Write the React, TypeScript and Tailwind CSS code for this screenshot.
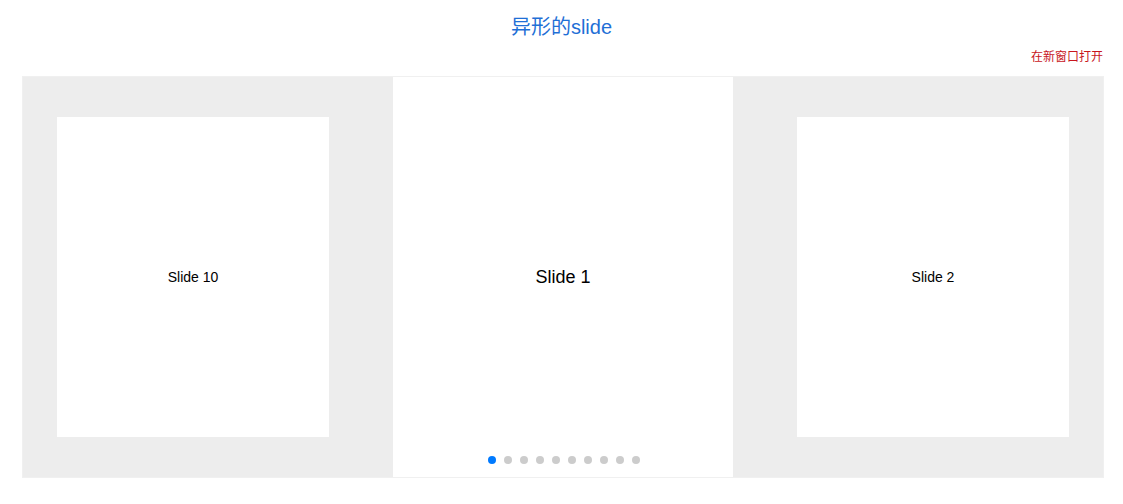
const slides = ['Slide 10', 'Slide 1', 'Slide 2'];

function SideSlide({ label }: { label: string }) {
  return (
    <div className="flex h-[400px] w-[340px] shrink-0 items-center justify-center">
      <div className="flex h-[320px] w-[272px] items-center justify-center bg-white text-[14px] text-black">
        {label}
      </div>
    </div>
  );
}

export default function App() {
  return (
    <div className="min-h-screen bg-white font-['Liberation_Sans','Noto_Sans_CJK_SC',sans-serif]">
      <h1 className="pt-[13px] text-center text-[20px] leading-[28px] text-[#1f6fd6]">异形的slide</h1>
      <div className="mt-[8px] flex h-[16px] justify-end pr-[20px]">
        <a className="text-[12px] leading-[16px] text-[#c8161d]" href="#">
          在新窗口打开
        </a>
      </div>
      <div className="relative ml-[22px] mt-[11px] h-[402px] w-[1082px] overflow-hidden border border-[#f0f0f0] bg-[#ededed]">
        <div className="flex gap-[30px]">
          <SideSlide label={slides[0]} />
          <div className="flex h-[400px] w-[340px] shrink-0 items-center justify-center bg-white text-[18px] text-black">
            {slides[1]}
          </div>
          <SideSlide label={slides[2]} />
        </div>
        <div className="absolute left-[371px] top-[379px] flex w-[340px] justify-center">
          {Array.from({ length: 10 }).map((_, i) => (
            <span
              key={i}
              className={`mx-[4px] h-[8px] w-[8px] rounded-full ${i === 0 ? 'bg-[#007aff]' : 'bg-[#cccccc]'}`}
            />
          ))}
        </div>
      </div>
    </div>
  );
}
